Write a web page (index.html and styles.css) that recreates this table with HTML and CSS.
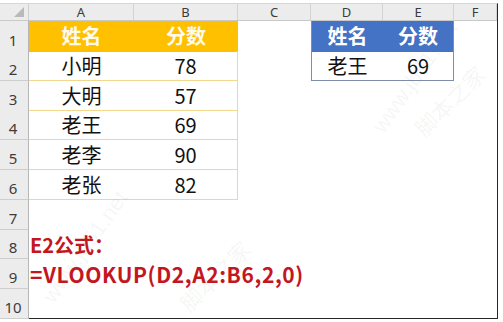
FILE: index.html
```html
<!DOCTYPE html>
<html lang="zh-CN">
<head>
<meta charset="utf-8">
<title>VLOOKUP</title>
<link rel="stylesheet" href="styles.css">
</head>
<body>
<div class="sheet">
  <div class="row hdr">
    <div class="corner"><span class="tri"></span></div>
    <div class="ch">A</div><div class="ch">B</div><div class="ch">C</div><div class="ch">D</div><div class="ch">E</div><div class="ch">F</div>
  </div>
  <div class="row">
    <div class="rh">1</div>
    <div class="c yh">姓名</div><div class="c yh">分数</div><div class="c"></div>
    <div class="c bh bl">姓名</div><div class="c bh br">分数</div><div class="c"></div>
  </div>
  <div class="row">
    <div class="rh">2</div>
    <div class="c yd">小明</div><div class="c yd yr">78</div><div class="c"></div>
    <div class="c bl bb">老王</div><div class="c br bb">69</div><div class="c"></div>
  </div>
  <div class="row">
    <div class="rh">3</div>
    <div class="c yd">大明</div><div class="c yd yr">57</div><div class="c"></div><div class="c"></div><div class="c"></div><div class="c"></div>
  </div>
  <div class="row">
    <div class="rh">4</div>
    <div class="c yd">老王</div><div class="c yd yr">69</div><div class="c"></div><div class="c"></div><div class="c"></div><div class="c"></div>
  </div>
  <div class="row">
    <div class="rh">5</div>
    <div class="c yd">老李</div><div class="c yd yr">90</div><div class="c"></div><div class="c"></div><div class="c"></div><div class="c"></div>
  </div>
  <div class="row">
    <div class="rh">6</div>
    <div class="c yd">老张</div><div class="c yd yr">82</div><div class="c"></div><div class="c"></div><div class="c"></div><div class="c"></div>
  </div>
  <div class="row">
    <div class="rh">7</div>
    <div class="c"></div><div class="c"></div><div class="c"></div><div class="c"></div><div class="c"></div><div class="c"></div>
  </div>
  <div class="row">
    <div class="rh">8</div>
    <div class="c f">E2公式：</div><div class="c"></div><div class="c"></div><div class="c"></div><div class="c"></div><div class="c"></div>
  </div>
  <div class="row">
    <div class="rh">9</div>
    <div class="c f fx">=VLOOKUP(D2,A2:B6,2,0)</div><div class="c"></div><div class="c"></div><div class="c"></div><div class="c"></div><div class="c"></div>
  </div>
  <div class="row last">
    <div class="rh">10</div>
    <div class="c"></div><div class="c"></div><div class="c"></div><div class="c"></div><div class="c"></div><div class="c"></div>
  </div>
  <span class="wm wm1">www.jb51.net</span>
  <span class="wm wm2">脚本之家</span>
  <span class="wm wm3">www.jb51.net</span>
  <span class="wm wm4">脚本之家</span>
</div>
</body>
</html>
```
FILE: styles.css
```css
html, body {
  margin: 0;
  padding: 0;
  background: #ffffff;
}
body {
  width: 503px;
  height: 322px;
  overflow: hidden;
  font-family: "Noto Sans CJK SC", "Noto Sans", sans-serif;
}
.sheet {
  position: relative;
  width: 497px;
  margin-top: 3px;
  border-top: 1px solid #d6d6d6;
  border-right: 1px solid #262626;
  display: flex;
  flex-direction: column;
}
.row {
  display: grid;
  grid-template-columns: 29px 105px 104px 73px 72px 71px 43px;
  height: 29.8px;
}
.row.hdr {
  height: 16px;
  background: #ececec;
  border-bottom: 1px solid #c9c9c9;
}
.corner {
  position: relative;
  border-right: 1px solid #cfcfcf;
}
.tri {
  position: absolute;
  right: 4px;
  bottom: 3px;
  width: 0;
  height: 0;
  border-left: 10px solid transparent;
  border-bottom: 10px solid #b9b9b9;
}
.ch {
  border-right: 1px solid #d3d3d3;
  font-family: "Noto Sans", "DejaVu Sans", sans-serif;
  font-size: 13px;
  line-height: 16px;
  color: #3c3c3c;
  text-align: center;
}
.rh {
  background: #ececec;
  border-right: 1px solid #b5b5b5;
  border-bottom: 1px solid #cdcdcd;
  font-family: "Noto Sans", "DejaVu Sans", sans-serif;
  font-size: 15px;
  color: #3c3c3c;
  display: flex;
  align-items: flex-end;
  justify-content: center;
  padding-right: 2px;
  padding-bottom: 1px;
  box-sizing: border-box;
}
.c {
  box-sizing: border-box;
  display: flex;
  align-items: center;
  justify-content: center;
  font-size: 20px;
  color: #111111;
  white-space: nowrap;
  min-width: 0;
}
.yh {
  background: #ffc000;
  color: #fffaf0;
  font-weight: 700;
  padding-bottom: 2px;
}
.yd {
  border-bottom: 1px solid #f1d88c;
}
.yr {
  border-right: 1px solid #f1d88c;
}
.bh {
  background: #4472c4;
  color: #ffffff;
  font-weight: 700;
  padding-bottom: 2px;
}
.bl {
  border-left: 1px solid #7f8dab;
}
.br {
  border-right: 1px solid #7f8dab;
}
.bb {
  border-bottom: 1px solid #7f8dab;
}
.f {
  justify-content: flex-start;
  overflow: visible;
  padding-left: 1px;
  color: #c3161e;
  font-family: "Noto Sans CJK SC", sans-serif;
  font-weight: 700;
  font-size: 20px;
  position: relative;
  z-index: 1;
}
.fx {
  font-size: 21px;
  letter-spacing: 0.6px;
}
.last .c {
  border-bottom: 1px solid #262626;
}
.last .rh {
  border-bottom: 1px solid #cdcdcd;
}
.wm {
  position: absolute;
  color: rgba(120, 120, 120, 0.07);
  font-family: "Liberation Sans", sans-serif;
  font-size: 22px;
  white-space: nowrap;
  pointer-events: none;
  z-index: 2;
}
.wm1 {
  left: 20px;
  top: 230px;
  transform: rotate(-55deg);
}
.wm2 {
  left: 170px;
  top: 255px;
  transform: rotate(-45deg);
  font-family: "Noto Sans CJK SC", sans-serif;
}
.wm3 {
  left: 350px;
  top: 60px;
  transform: rotate(-55deg);
}
.wm4 {
  left: 405px;
  top: 80px;
  transform: rotate(-45deg);
  font-family: "Noto Sans CJK SC", sans-serif;
}
```
